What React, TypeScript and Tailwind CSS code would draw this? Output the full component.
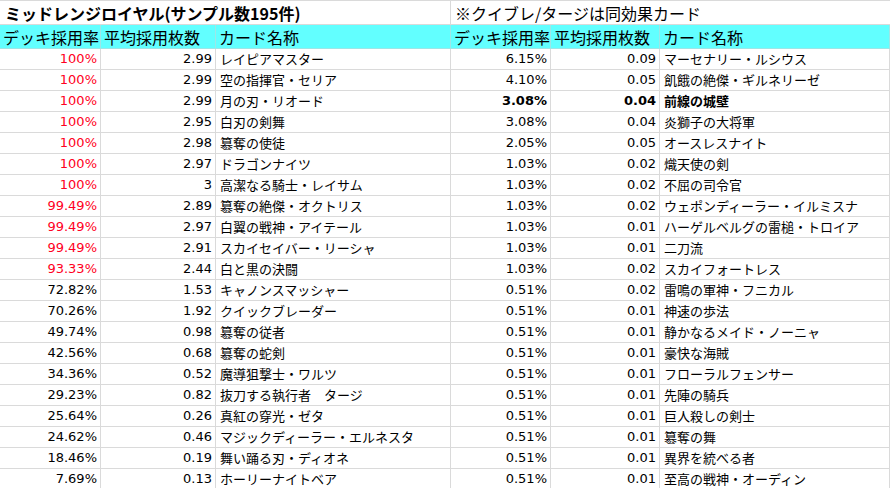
import React from "react";

type Row = [string, string, string, boolean?];

const left: Row[] = [
  ["100%", "2.99", "レイピアマスター"],
  ["100%", "2.99", "空の指揮官・セリア"],
  ["100%", "2.99", "月の刃・リオード"],
  ["100%", "2.95", "白刃の剣舞"],
  ["100%", "2.98", "簒奪の使徒"],
  ["100%", "2.97", "ドラゴンナイツ"],
  ["100%", "3", "高潔なる騎士・レイサム"],
  ["99.49%", "2.89", "簒奪の絶傑・オクトリス"],
  ["99.49%", "2.97", "白翼の戦神・アイテール"],
  ["99.49%", "2.91", "スカイセイバー・リーシャ"],
  ["93.33%", "2.44", "白と黒の決闘"],
  ["72.82%", "1.53", "キャノンスマッシャー"],
  ["70.26%", "1.92", "クイックブレーダー"],
  ["49.74%", "0.98", "簒奪の従者"],
  ["42.56%", "0.68", "簒奪の蛇剣"],
  ["34.36%", "0.52", "魔導狙撃士・ワルツ"],
  ["29.23%", "0.82", "抜刀する執行者　タージ"],
  ["25.64%", "0.26", "真紅の穿光・ゼタ"],
  ["24.62%", "0.46", "マジックディーラー・エルネスタ"],
  ["18.46%", "0.19", "舞い踊る刃・ディオネ"],
  ["7.69%", "0.13", "ホーリーナイトベア"],
];

const right: Row[] = [
  ["6.15%", "0.09", "マーセナリー・ルシウス"],
  ["4.10%", "0.05", "飢餓の絶傑・ギルネリーゼ"],
  ["3.08%", "0.04", "前線の城壁", true],
  ["3.08%", "0.04", "炎獅子の大将軍"],
  ["2.05%", "0.05", "オースレスナイト"],
  ["1.03%", "0.02", "熾天使の剣"],
  ["1.03%", "0.02", "不屈の司令官"],
  ["1.03%", "0.02", "ウェポンディーラー・イルミスナ"],
  ["1.03%", "0.01", "ハーゲルベルグの雷槌・トロイア"],
  ["1.03%", "0.01", "二刀流"],
  ["1.03%", "0.02", "スカイフォートレス"],
  ["0.51%", "0.02", "雷鳴の軍神・フニカル"],
  ["0.51%", "0.01", "神速の歩法"],
  ["0.51%", "0.01", "静かなるメイド・ノーニャ"],
  ["0.51%", "0.01", "豪快な海賊"],
  ["0.51%", "0.01", "フローラルフェンサー"],
  ["0.51%", "0.01", "先陣の騎兵"],
  ["0.51%", "0.01", "巨人殺しの剣士"],
  ["0.51%", "0.01", "簒奪の舞"],
  ["0.51%", "0.01", "異界を統べる者"],
  ["0.51%", "0.01", "至高の戦神・オーディン"],
];

const numCls =
  "h-[21px] border-r border-b border-[#dadada] flex items-center justify-end pr-[3px] text-[13px] font-['DejaVu_Sans','Noto_Sans_CJK_JP',sans-serif] whitespace-nowrap";
const nameCls =
  "h-[21px] border-r border-b border-[#dadada] flex items-center pl-[4px] text-[13px] font-['Noto_Sans_CJK_JP',sans-serif] whitespace-nowrap overflow-hidden";
const headCls =
  "h-[24px] border-r border-b border-[#9ee6e6] bg-[#62ffff] flex items-center pl-[3px] text-[16px] font-['Noto_Sans_CJK_JP',sans-serif] whitespace-nowrap overflow-hidden";

export default function App() {
  const rows = left.map((l, i) => [l, right[i]] as const);
  return (
    <div className="w-[890px] h-[488px] overflow-hidden bg-white text-black">
      <div className="grid grid-cols-[101px_115px_235px_100px_109px_230px] border-t border-[#dadada]">
        <div className="col-span-3 h-[24px] border-r border-b border-[#dadada] flex items-center pl-[5px] text-[16px] font-bold font-['DejaVu_Sans','Noto_Sans_CJK_JP',sans-serif] whitespace-nowrap">
          <span className="font-['Noto_Sans_CJK_JP',sans-serif]">ミッドレンジロイヤル(サンプル数195件)</span>
        </div>
        <div className="col-span-3 h-[24px] border-b border-[#dadada] flex items-center pl-[4px] text-[16px] font-['Noto_Sans_CJK_JP',sans-serif] whitespace-nowrap">
          ※クイブレ/タージは同効果カード
        </div>
        {["デッキ採用率", "平均採用枚数", "カード名称", "デッキ採用率", "平均採用枚数", "カード名称"].map(
          (h, i) => (
            <div key={i} className={headCls}>
              {h}
            </div>
          )
        )}
        {rows.map(([l, r], i) => (
          <React.Fragment key={i}>
            <div className={numCls + (i < 11 ? " text-[#ff0022]" : "")}>{l[0]}</div>
            <div className={numCls}>{l[1]}</div>
            <div className={nameCls}>{l[2]}</div>
            <div className={numCls + (r[3] ? " font-bold" : "")}>{r[0]}</div>
            <div className={numCls + (r[3] ? " font-bold" : "")}>{r[1]}</div>
            <div className={nameCls + (r[3] ? " font-bold" : "")}>{r[2]}</div>
          </React.Fragment>
        ))}
      </div>
    </div>
  );
}
